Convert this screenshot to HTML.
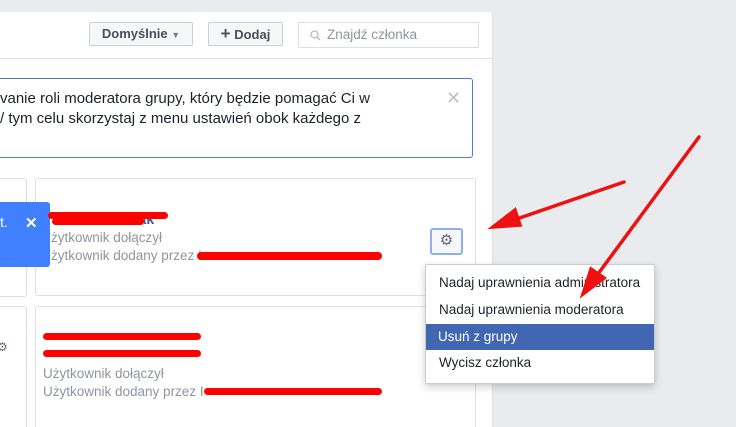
<html style="overflow:hidden;width:736px;height:427px"><head><style>
body{margin:0;width:736px;height:427px;overflow:hidden;background:#e9ebee;font-family:"Liberation Sans",Arial,sans-serif;position:relative}
.a{position:absolute}
.panel{left:0;top:12px;width:492px;height:415px;background:#fff;border-right:1px solid #dddfe2}
.btn{top:22px;height:24px;border:1px solid #ccd0d5;background:#f6f7f9;border-radius:2px;font-size:13px;font-weight:bold;color:#4b4f56;line-height:22px;box-sizing:border-box;text-align:center}
.card{border:1px solid #dddfe2;border-radius:3px;background:#fff}
.g{color:#90949c;font-size:13.5px}
.red{background:#f00;height:7px;border-radius:4px}
.mi{left:1px;width:226px;height:26px;line-height:26px;padding-left:12px;box-sizing:border-box;font-size:13.5px;color:#1d2129}
</style></head><body>
<div class="a panel"></div>
<div class="a" style="left:0;top:58px;width:492px;height:1px;background:#dddfe2"></div>
<div class="a btn" style="left:89px;width:104px">Domyślnie <span style="font-size:9px;color:#7f7f7f">▼</span></div>
<div class="a btn" style="left:208px;width:75px"><span style="font-size:17px">+</span> Dodaj</div>
<div class="a" style="left:298px;top:22px;width:181px;height:26px;border:1px solid #dddfe2;box-sizing:border-box;font-size:13.5px;color:#90949c;line-height:24px;padding-left:28px">Znajdź członka</div>
<svg class="a" style="left:310px;top:30px" width="11" height="11"><circle cx="4.5" cy="4.5" r="3.5" fill="none" stroke="#bbb" stroke-width="1.3"/><path d="M7 7l3 3" stroke="#bbb" stroke-width="1.5"/></svg>
<div class="a" style="left:-5px;top:78px;width:478px;height:80px;border:1px solid #4a7fd6;border-radius:3px;box-sizing:border-box"></div>
<div class="a" style="left:0;top:89px;font-size:15px;color:#1d2129;line-height:20px;white-space:nowrap">vanie roli moderatora grupy, który będzie pomagać Ci w<br>/ tym celu skorzystaj z menu ustawień obok każdego z</div>
<div class="a" style="left:446px;top:88px;font-size:18px;color:#bec2c9">✕</div>
<div class="a card" style="left:-5px;top:178px;width:30px;height:117px"></div>
<div class="a card" style="left:35px;top:178px;width:439px;height:116px"></div>
<div class="a card" style="left:-5px;top:306px;width:30px;height:130px"></div>
<div class="a card" style="left:35px;top:306px;width:439px;height:130px"></div>
<div class="a" style="left:0;top:202px;width:50px;height:65px;background:#4080ff;border-radius:0 3px 3px 0"></div>
<div class="a" style="left:0;top:214px;color:#fff;font-size:14px">t.</div>
<div class="a" style="left:25px;top:214px;color:#fff;font-size:15px;font-weight:bold">✕</div>
<div class="a" style="left:130px;top:211px;font-size:14px;font-weight:bold;color:#365899">nak</div>
<div class="a red" style="left:48px;top:212px;width:120px"></div>
<div class="a red" style="left:52px;top:218px;width:92px"></div>
<div class="a g" style="left:51px;top:230px">żytkownik dołączył</div>
<div class="a g" style="left:51px;top:248px">żytkownik dodany przez I</div>
<div class="a red" style="left:197px;top:252px;width:185px;height:8px"></div>
<div class="a" style="left:430px;top:228px;width:33px;height:27px;border:2px solid #8fb0f0;border-radius:3px;box-sizing:border-box;background:#f6f7f9;text-align:center;line-height:22px;color:#606770;font-size:15px">⚙</div>
<div class="a" style="left:-3px;top:340px;font-size:12px;color:#606770">⚙</div>
<div class="a red" style="left:43px;top:333px;width:158px"></div>
<div class="a red" style="left:43px;top:350px;width:158px"></div>
<div class="a g" style="left:43px;top:366px">Użytkownik dołączył</div>
<div class="a g" style="left:43px;top:384px">Użytkownik dodany przez I</div>
<div class="a red" style="left:204px;top:388px;width:178px"></div>
<div class="a" style="left:425px;top:264px;width:228px;height:118px;background:#fff;border:1px solid #c8cbd0;border-radius:2px;box-shadow:0 3px 8px rgba(0,0,0,.2)">
<div class="a mi" style="top:5px">Nadaj uprawnienia administratora</div>
<div class="a mi" style="top:32px">Nadaj uprawnienia moderatora</div>
<div class="a mi" style="top:59px;left:0;width:228px;background:#4267b2;color:#fff">Usuń z grupy</div>
<div class="a mi" style="top:85px">Wycisz członka</div>
</div>
<svg class="a" style="left:0;top:0" width="736" height="427"><g stroke="#ee1111" stroke-width="3.5" fill="#ee1111" stroke-linecap="round">
<path d="M624 182L508 222"/><path d="M493 227l22-17 5 15z"/>
<path d="M699 137L595 278"/><path d="M583 294l8-25 13 9z"/></g></svg>
</body></html>
